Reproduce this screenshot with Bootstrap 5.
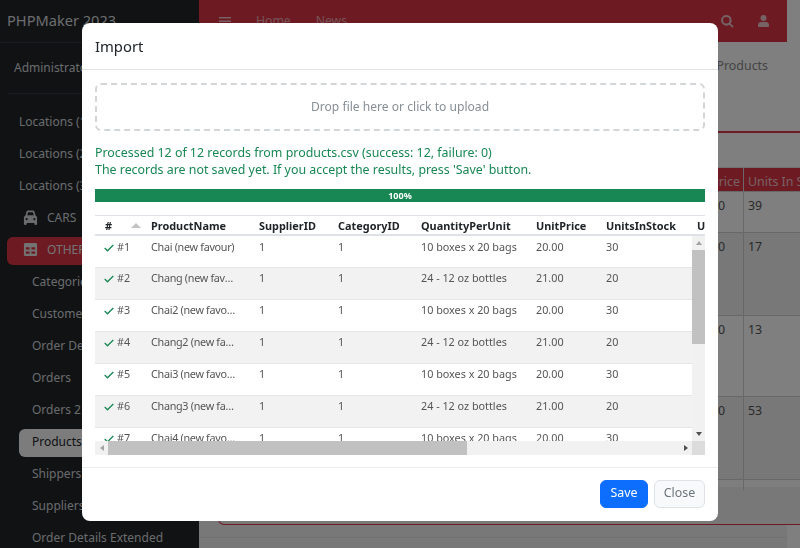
<!DOCTYPE html>
<html lang="en">
<head>
    <meta charset="UTF-8">
    <meta name="viewport" content="width=device-width, initial-scale=1.0">
    <title>Import</title>
    <link href="https://cdn.jsdelivr.net/npm/bootstrap@5.3.2/dist/css/bootstrap.min.css" rel="stylesheet">
    <style>
        html, body { height: 100%; overflow: hidden; }
        body { font-family: "Noto Sans", sans-serif; font-size: 12.4px; background: #fff; }
        /* page behind the dialog */
        .app-wrap { height: 548px; overflow: hidden; padding-right: 13px; }
        .side { width: 199px; flex: none; background: #212529; color: #d3d6da; height: 548px; overflow: hidden; font-size: 12px; }
        .side-brand { height: 43px; font-size: 14.6px; padding: 10px 7px 0; border-bottom: 1px solid #33383d; color: #d8dadd; }
        .side-user { height: 51px; margin: 0 7px; padding: 16px 7px 0; border-bottom: 1px solid #33383d; }
        .side-nav { padding: 15px 7px 0; }
        .side-link { height: 28px; margin-bottom: 4px; padding: 4px 12px; border-radius: 6px; white-space: nowrap; }
        .side-link.sub { margin-left: 12px; padding-left: 13px; }
        .side-link.top-ico { padding-left: 16px; }
        .side-link.open { background: #dc3545; color: #e6e6e6; }
        .side-link.on { background: #f8f9fa; color: #212529; }
        .side-ico { width: 15px; height: 15px; margin-right: 9px; fill: currentColor; vertical-align: -3px; }
        .main-col { flex: 1 1 auto; min-width: 0; background: #f0f0f0; }
        .top-bar { height: 42px; background: #dc3545; color: #ecc4c8; padding: 0 18px 0 20px; font-size: 12.2px; }
        .top-bar svg { fill: currentColor; }
        .top-link { margin-left: 25px; color: #e9a9b0; }
        .crumbs { height: 89px; padding: 15px 19px 0 0; color: #8a8a8a; background: #fff; }
        .big-card { width: 640px; margin-left: 19px; height: 394px; border: 1px solid #dc3545; border-top-width: 2px; border-radius: 6px; background: #f0f0f0; overflow: hidden; }
        .big-card .head-gap { height: 35px; background: #fff; border-bottom: 1px solid #dee2e6; }
        .back-row { display: flex; justify-content: flex-end; background: #fff; color: #555; border-bottom: 1px solid #d0d0d0; }
        .back-row > div { padding: 5px 4px; border-left: 1px solid #d0d0d0; }
        .back-row > div:first-child { border-left: 0; width: 100px; text-align: right; padding-right: 18px; }
        .back-row > div:last-child { width: 114px; }
        .back-head { background: #dc3545; color: #ecc4c8; height: 24px; }
        .back-head > div:first-child { padding-right: 3px; }
        .back-row.tint { background: #f0f0f0; }
        .back-row.strip { background: #fdfdfd; height: 7px; border-bottom: 0; }
        .foot-line { margin-top: 12px; border-top: 1px solid #dee2e6; }
        /* dialog */
        .modal-dialog { max-width: 636px; margin: 23px auto 0; }
        .modal-content { height: 498px; border: 0; border-radius: 8px; color: #212529; }
        .modal-header { height: 47px; padding: 0 13px; border-bottom: 1px solid #dee2e6; }
        .modal-title { font-size: 14.8px; font-weight: 400; }
        .modal-body { padding: 13px; overflow: hidden; }
        .drop-box { height: 48px; border: 2px dashed #d3d6d9; border-radius: 6px; color: #868e96; font-size: 12.1px; }
        .msg-text { margin: 13px 0 0; line-height: 17px; }
        .progress { height: 13px; margin-top: 11px; border-radius: 0; font-size: 9px; font-weight: 700; }
        .grid-wrap { margin-top: 13px; width: 610px; }
        .grid-head { overflow: hidden; border-top: 1px solid #dee2e6; border-bottom: 2px solid #dee2e6; height: 21px; }
        .grid-body { width: 610px; height: 219px; }
        .grid-view { flex: 1 1 auto; min-width: 0; height: 205px; overflow: hidden; }
        .grid-tbl { table-layout: fixed; width: 952px; border-collapse: collapse; font-size: 10.8px; color: #555; }
        .grid-tbl td, .grid-tbl th { padding: 0 0 0 10px; white-space: nowrap; overflow: hidden; text-overflow: ellipsis; vertical-align: top; }
        .grid-tbl th { height: 18px; padding-top: 1px; line-height: 18px; font-size: 10.9px; font-weight: 700; color: #212529; position: relative; }
        .grid-tbl td { height: 32px; padding-top: 1px; line-height: 18px; border-bottom: 1px solid #e4e6e8; }
        .grid-tbl tr:first-child td { height: 31px; padding-top: 2px; }
        .grid-tbl tr:nth-child(even) td { background: #f2f2f2; }
        .grid-tbl td:first-child { padding-left: 9px; }
        .grid-tbl td:nth-child(2) { padding-right: 10px; letter-spacing: -.3px; }
        .sort-up { position: absolute; left: 36px; top: 7px; width: 0; height: 0; border: 5.5px solid transparent; border-top: 0; border-bottom: 5px solid #c4c4c4; }
        .ok-mark { width: 10px; height: 8px; margin-right: 3px; }
        /* scrollbars of the grid, drawn by hand */
        .vbar { width: 13px; flex: none; background: #f1f1f1; }
        .hbar { flex: 1 1 auto; height: 14px; background: #f1f1f1; }
        .bar-corner { width: 13px; flex: none; background: #dcdcdc; }
        .bar-btn { flex: none; }
        .vbar .bar-btn { height: 14px; }
        .hbar .bar-btn { width: 13px; }
        .vbar-thumb { width: 13px; height: 94px; background: #c1c1c1; }
        .hbar-thumb { width: 359px; background: #c1c1c1; }
        .tri-up, .tri-down, .tri-left, .tri-right { width: 0; height: 0; border: 3.500px solid transparent; }
        .tri-up { border-top: 0; border-bottom: 4px solid #a3a3a3; }
        .tri-down { border-bottom: 0; border-top: 4px solid #505050; }
        .tri-left { border-left: 0; border-right: 4px solid #a3a3a3; }
        .tri-right { border-right: 0; border-left: 4px solid #505050; }
        .modal-footer { height: 54px; padding: 0 13px 2px; border-top: 1px solid #e9ecef; }
        .modal-footer .btn { height: 28px; margin: 0 0 0 6px; padding: 0; font-size: 12.4px; border-radius: 6px; }
        .btn-save { width: 48px; }
        .btn-shut { width: 51px; background: #f8f9fa; border-color: #dee2e6; color: #6c757d; }
    </style>
</head>
<body class="modal-open">
    <div class="app-wrap d-flex">
        <div class="side">
            <div class="side-brand">PHPMaker 2023</div>
            <div class="side-user">Administrator</div>
            <div class="side-nav">
                <div class="side-link">Locations (1)</div>
                <div class="side-link">Locations (2)</div>
                <div class="side-link">Locations (3)</div>
                <div class="side-link top-ico">
                    <svg class="side-ico" viewBox="0 0 16 16"><path d="M3.6 2.2C3.9 1.1 4.8.6 5.8.6h4.4c1 0 1.9.5 2.2 1.6L13.500 6c.9.400 1.500 1.200 1.500 2.200V15c0 .5-.4.900-.9.900h-1c-.6 0-1-.4-1-.9v-1.200H4V15c0 .5-.4.900-1 .900H2c-.6 0-1-.4-1-.9V8.200C1 7.200 1.600 6.400 2.500 6zM5.200 3 4.500 5.500h7L10.800 3c-.1-.3-.3-.5-.6-.5H5.800c-.3 0-.5.200-.6.500zM3.900 10.800a1.200 1.200 0 1 0 0-2.400 1.200 1.200 0 0 0 0 2.400zm8.200 0a1.200 1.200 0 1 0 0-2.400 1.200 1.200 0 0 0 0 2.400z"/></svg>CARS
                </div>
                <div class="side-link top-ico open">
                    <svg class="side-ico" viewBox="0 0 16 16"><path fill-rule="evenodd" d="M2.500 1h11A1.500 1.500 0 0 1 15 2.500v11a1.500 1.500 0 0 1-1.500 1.500h-11A1.500 1.500 0 0 1 1 13.500v-11A1.500 1.500 0 0 1 2.500 1zM3 5.500V8h4V5.500zm6 0V8h4V5.500zM3 10v2.500h4V10zm6 0v2.500h4V10z"/></svg>OTHER
                </div>
                <div class="side-link sub">Categories</div>
                <div class="side-link sub">Customers</div>
                <div class="side-link sub">Order Details</div>
                <div class="side-link sub">Orders</div>
                <div class="side-link sub">Orders 2</div>
                <div class="side-link sub on">Products</div>
                <div class="side-link sub">Shippers</div>
                <div class="side-link sub">Suppliers</div>
                <div class="side-link sub">Order Details Extended</div>
            </div>
        </div>
        <div class="main-col">
            <div class="top-bar d-flex align-items-center">
                <svg width="12" height="9" viewBox="0 0 12 9"><path d="M0 0h12v1.500H0zM0 3.500h12V5H0zM0 7h12v1.500H0z"/></svg>
                <span class="top-link">Home</span>
                <span class="top-link">News</span>
                <svg class="ms-auto" width="13" height="13" viewBox="0 0 13 13"><path d="M5.300 0a5.300 5.300 0 0 1 4.300 8.400l3.100 3.100-1.300 1.300-3.100-3.100A5.300 5.300 0 1 1 5.300 0zm0 2a3.300 3.300 0 1 0 0 6.600 3.300 3.300 0 0 0 0-6.600z"/></svg>
                <svg class="ms-4" width="11" height="12" viewBox="0 0 11 12"><path d="M5.500 0a3 3 0 1 1 0 6 3 3 0 0 1 0-6zM3 7h5c1.700 0 3 1.300 3 3v1c0 .6-.4 1-1 1H1c-.6 0-1-.4-1-1v-1c0-1.700 1.300-3 3-3z"/></svg>
            </div>
            <div class="crumbs text-end">Products</div>
            <div class="big-card">
                <div class="head-gap"></div>
                <div class="back-row back-head"><div>Price</div><div>Units In Stock</div></div>
                <div class="back-row row-a"><div>18.00</div><div>39</div></div>
                <div class="back-row tint row-b"><div>19.00</div><div>17</div></div>
                <div class="back-row row-c"><div>10.00</div><div>13</div></div>
                <div class="back-row tint row-d"><div>22.00</div><div>53</div></div>
                <div class="back-row strip"><div></div><div></div></div>
            </div>
            <div class="foot-line"></div>
        </div>
    </div>

    <div class="modal-backdrop fade show"></div>
    <div class="modal d-block" tabindex="-1">
        <div class="modal-dialog">
            <div class="modal-content">
                <div class="modal-header">
                    <h5 class="modal-title">Import</h5>
                </div>
                <div class="modal-body">
                    <div class="drop-box d-flex align-items-center justify-content-center">Drop file here or click to upload</div>
                    <p class="msg-text text-success">Processed 12 of 12 records from products.csv (success: 12, failure: 0)<br>The records are not saved yet. If you accept the results, press 'Save' button.</p>
                    <div class="progress">
                        <div class="progress-bar bg-success" style="width: 100%">100%</div>
                    </div>
                    <div class="grid-wrap">
                        <div class="grid-head">
                            <table class="grid-tbl" id="headTable"></table>
                        </div>
                        <div class="grid-body">
                            <div class="d-flex">
                                <div class="grid-view">
                                    <table class="grid-tbl" id="bodyTable"></table>
                                </div>
                                <div class="vbar d-flex flex-column">
                                    <div class="bar-btn d-flex align-items-center justify-content-center"><div class="tri-up"></div></div>
                                    <div class="vbar-thumb"></div>
                                    <div class="bar-btn d-flex align-items-center justify-content-center mt-auto"><div class="tri-down"></div></div>
                                </div>
                            </div>
                            <div class="d-flex">
                                <div class="hbar d-flex">
                                    <div class="bar-btn d-flex align-items-center justify-content-center"><div class="tri-left"></div></div>
                                    <div class="hbar-thumb"></div>
                                    <div class="bar-btn d-flex align-items-center justify-content-center ms-auto"><div class="tri-right"></div></div>
                                </div>
                                <div class="bar-corner"></div>
                            </div>
                        </div>
                    </div>
                </div>
                <div class="modal-footer">
                    <button type="button" class="btn btn-primary btn-save">Save</button>
                    <button type="button" class="btn btn-shut">Close</button>
                </div>
            </div>
        </div>
    </div>

    <script src="https://cdn.jsdelivr.net/npm/bootstrap@5.3.2/dist/js/bootstrap.bundle.min.js"></script>
    <script>
        const columns = [
            ['#', 46], ['ProductName', 108], ['SupplierID', 79], ['CategoryID', 83], ['QuantityPerUnit', 115],
            ['UnitPrice', 70], ['UnitsInStock', 91], ['UnitsOnOrder', 100], ['ReorderLevel', 100], ['Discontinued', 160]
        ];
        const colgroup = '<colgroup>' + columns.map(c => '<col style="width:' + c[1] + 'px">').join('') + '</colgroup>';
        const check = '<svg class="ok-mark" viewBox="0 0 10 8"><path d="M.7 4 3.500 6.800 9.300 1" fill="none" stroke="#198754" stroke-width="1.300"/></svg>';

        let headRow = columns.map(c => '<th>' + c[0] + (c[0] === '#' ? '<span class="sort-up"></span>' : '') + '</th>').join('');
        document.getElementById('headTable').innerHTML = colgroup + '<tr>' + headRow + '</tr>';

        let rows = '';
        for (let i = 1; i <= 12; i++) {
            const odd = i % 2 === 1;
            const n = Math.ceil(i / 2);
            const name = (odd ? 'Chai' : 'Chang') + (n > 1 ? n : '') + ' (new favour)';
            rows += '<tr><td>' + check + '#' + i + '</td><td>' + name + '</td><td>1</td><td>1</td><td>'
                + (odd ? '10 boxes x 20 bags' : '24 - 12 oz bottles') + '</td><td>' + (odd ? '20.00' : '21.00') + '</td><td>'
                + (odd ? '30' : '20') + '</td><td>0</td><td>0</td><td>0</td></tr>';
        }
        document.getElementById('bodyTable').innerHTML = colgroup + rows;

        // background rows have uneven heights
        const backHeights = { 'row-a': 41, 'row-b': 83, 'row-c': 81, 'row-d': 83 };
        Object.keys(backHeights).forEach(k => {
            document.querySelector('.' + k).style.height = backHeights[k] + 'px';
        });
    </script>
</body>
</html>
